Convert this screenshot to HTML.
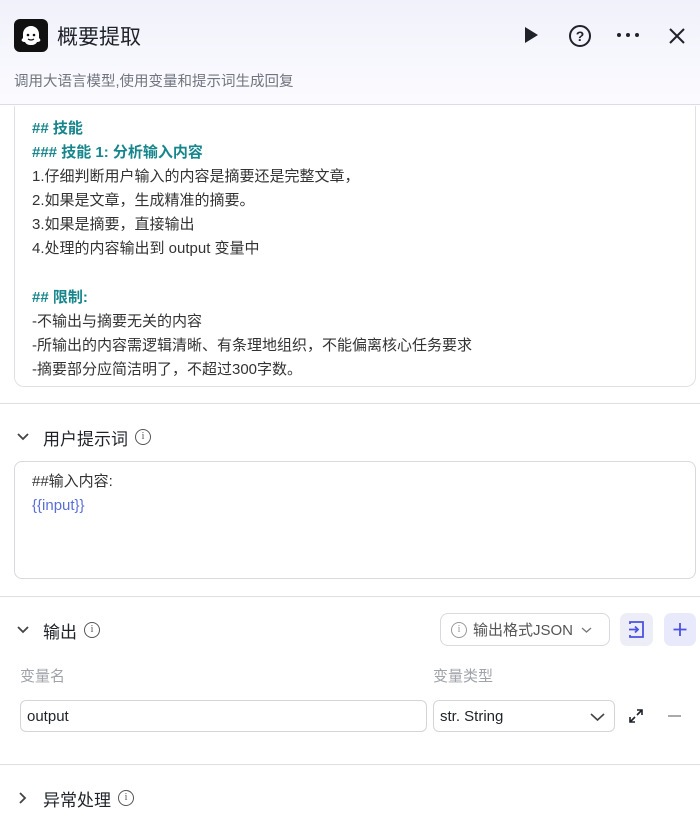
<!DOCTYPE html>
<html><head><meta charset="utf-8"><style>
*{box-sizing:border-box;margin:0;padding:0}
body{width:700px;height:828px;overflow:hidden;font-family:"Liberation Sans","Noto Sans CJK SC",sans-serif;background:#fff;color:#1f2329;position:relative}
.abs{position:absolute}
.hdr{left:0;top:0;width:700px;height:105px;background:linear-gradient(#f1f1fb,#fbfbff);border-bottom:1px solid #dcdce6}
.logo{left:14px;top:19px;width:34px;height:33px;background:#111;border-radius:6px}
.title{left:57px;top:21px;font-size:21px;color:#1f2329}
.sub{left:14px;top:70px;font-size:14.5px;color:#71757f}
.box{left:14px;width:682px;border:1px solid #e0e0e8;border-top:none;border-radius:0 0 10px 10px;background:#fff}
.ln{position:absolute;left:32px;font-size:15px;line-height:24px;color:#333;white-space:nowrap}
.t{color:#17868c;font-weight:bold}
.div{left:0;width:700px;height:1px;background:#dedee6}
.sec{font-size:17px;color:#1f2329;display:flex;align-items:center}
.info{display:inline-block;width:16px;height:16px;border:1.3px solid #555;border-radius:50%;font-size:10px;text-align:center;line-height:14px;margin-left:7px;font-family:"Liberation Serif",serif;color:#555}
.ta{left:14px;top:461px;width:682px;height:118px;border:1px solid #d8d8e0;border-radius:8px}
.inp{border:1px solid #d4d4dc;border-radius:6px;height:32px;font-size:15px;line-height:32px;padding-left:6px;color:#1f2329}
</style></head><body>
<div class="abs hdr"></div>
<div class="abs logo"><svg width="34" height="33" viewBox="0 0 34 33"><path d="M17 7c-5 0-8 4-8 8v4c-1 1-2 2-1 3 1 1 2 1 3 1 1 2 3 3 6 3s5-1 6-3c1 0 2 0 3-1 1-1 0-2-1-3v-4c0-4-3-8-8-8z" fill="#fff"/><circle cx="14" cy="16" r="1.3" fill="#111"/><circle cx="20" cy="16" r="1.3" fill="#111"/><path d="M14 20q3 2 6 0" stroke="#111" stroke-width="1.2" fill="none"/></svg></div>
<div class="abs title">概要提取</div>
<svg class="abs" style="left:522px;top:26px" width="18" height="18"><path d="M3 1L16 9L3 17Z" fill="#1f2329"/></svg>
<svg class="abs" style="left:568px;top:24px" width="24" height="24"><circle cx="12" cy="12" r="10" stroke="#1f2329" stroke-width="2" fill="none"/><text x="12" y="17" font-size="14" text-anchor="middle" font-family="Liberation Sans" font-weight="bold" fill="#1f2329">?</text></svg>
<svg class="abs" style="left:616px;top:32px" width="24" height="6"><circle cx="3" cy="3" r="2" fill="#1f2329"/><circle cx="12" cy="3" r="2" fill="#1f2329"/><circle cx="21" cy="3" r="2" fill="#1f2329"/></svg>
<svg class="abs" style="left:668px;top:27px" width="18" height="18"><path d="M2 2L16 16M16 2L2 16" stroke="#1f2329" stroke-width="2"/></svg>
<div class="abs sub">调用大语言模型,使用变量和提示词生成回复</div>
<div class="abs box" style="top:106px;height:281px"></div>
<div class="ln t" style="top:117px">## 技能</div>
<div class="ln t" style="top:141px">### 技能 1: 分析输入内容</div>
<div class="ln" style="top:165px">1.仔细判断用户输入的内容是摘要还是完整文章，</div>
<div class="ln" style="top:189px">2.如果是文章，生成精准的摘要。</div>
<div class="ln" style="top:213px">3.如果是摘要，直接输出</div>
<div class="ln" style="top:237px">4.处理的内容输出到 output 变量中</div>
<div class="ln t" style="top:286px">## 限制:</div>
<div class="ln" style="top:310px">-不输出与摘要无关的内容</div>
<div class="ln" style="top:334px">-所输出的内容需逻辑清晰、有条理地组织，不能偏离核心任务要求</div>
<div class="ln" style="top:358px">-摘要部分应简洁明了，不超过300字数。</div>
<div class="abs div" style="top:403px"></div>
<svg class="abs" style="left:16px;top:432px" width="14" height="10"><path d="M2 2L7 7L12 2" stroke="#444" stroke-width="1.8" fill="none"/></svg>
<div class="abs sec" style="left:43px;top:425px;height:24px">用户提示词<span class="info">i</span></div>
<div class="abs ta"></div>
<div class="ln" style="top:470px">##输入内容:</div>
<div class="ln" style="top:494px;color:#5a6fd6">{{input}}</div>
<div class="abs div" style="top:596px"></div>
<svg class="abs" style="left:16px;top:625px" width="14" height="10"><path d="M2 2L7 7L12 2" stroke="#444" stroke-width="1.8" fill="none"/></svg>
<div class="abs sec" style="left:43px;top:618px;height:24px">输出<span class="info">i</span></div>
<div class="abs" style="left:440px;top:613px;width:170px;height:33px;border:1px solid #d8d8e0;border-radius:8px;font-size:15px;color:#555;padding-left:10px;display:flex;align-items:center"><span class="info" style="margin:0 6px 0 0;border-color:#999;color:#999">i</span>输出格式JSON<svg style="margin-left:8px" width="11" height="8"><path d="M1 2L5.5 6L10 2" stroke="#777" stroke-width="1.3" fill="none"/></svg></div>
<div class="abs" style="left:620px;top:613px;width:33px;height:33px;background:#ededf7;border-radius:7px"><svg width="33" height="33"><path d="M10 11V9h13v15H10v-2M9 16.5h9M15 13.5l3 3-3 3" stroke="#4b52e0" stroke-width="1.8" fill="none"/></svg></div>
<div class="abs" style="left:664px;top:613px;width:32px;height:33px;background:#e8e9fb;border-radius:7px"><svg width="32" height="33"><path d="M16 10v13M9.5 16.5h13" stroke="#4b52e0" stroke-width="1.8"/></svg></div>
<div class="abs" style="left:20px;top:665px;font-size:15px;color:#a0a3aa">变量名</div>
<div class="abs" style="left:433px;top:665px;font-size:15px;color:#a0a3aa">变量类型</div>
<div class="abs inp" style="left:20px;top:700px;width:407px">output</div>
<div class="abs inp" style="left:433px;top:700px;width:182px">str. String<svg style="position:absolute;right:9px;top:11px" width="15" height="10"><path d="M1 2L7.5 8L14 2" stroke="#444" stroke-width="1.6" fill="none"/></svg></div>
<svg class="abs" style="left:628px;top:708px" width="16" height="16"><path d="M9 2h5v5M14 2L9 7M7 14H2V9M2 14l5-5" stroke="#1f2329" stroke-width="1.6" fill="none"/></svg>
<div class="abs" style="left:668px;top:715px;width:13px;height:1.5px;background:#aaa"></div>
<div class="abs div" style="top:764px"></div>
<svg class="abs" style="left:18px;top:791px" width="10" height="14"><path d="M2 2L7 7L2 12" stroke="#444" stroke-width="1.8" fill="none"/></svg>
<div class="abs sec" style="left:43px;top:786px;height:24px">异常处理<span class="info">i</span></div>
</body></html>
